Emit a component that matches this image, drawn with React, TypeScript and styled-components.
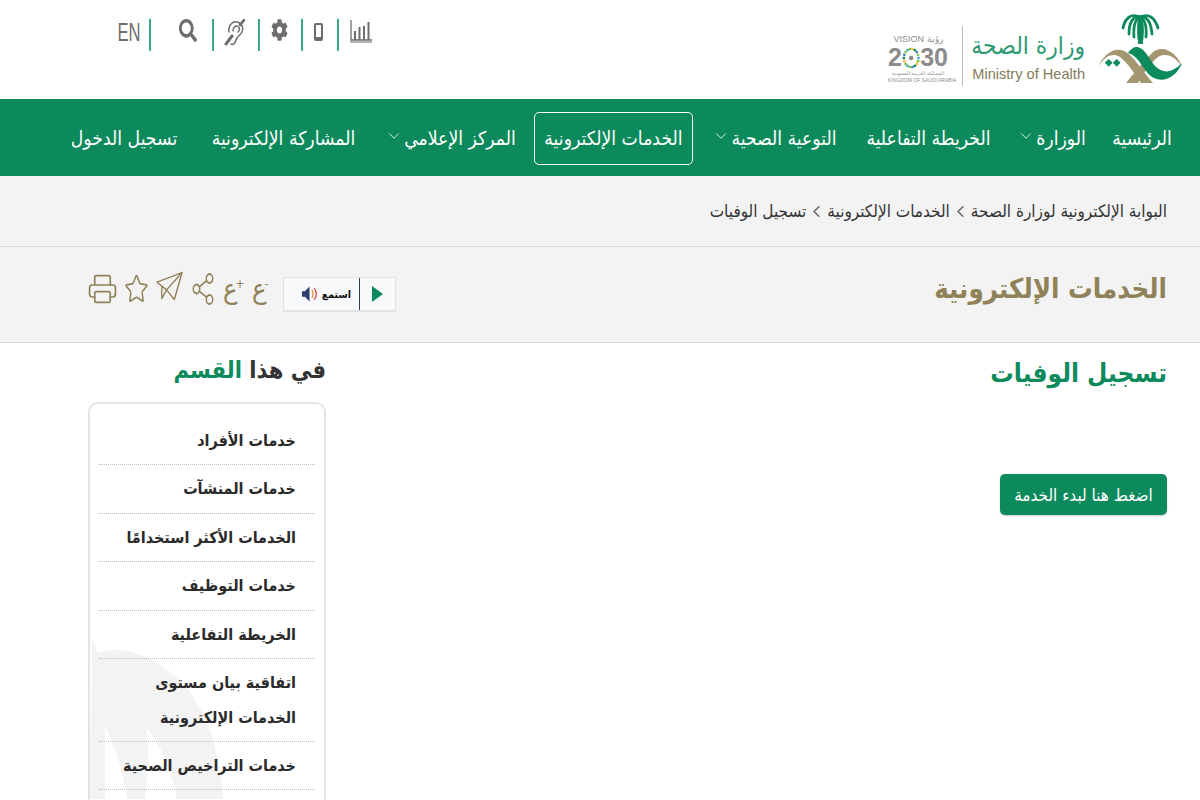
import * as React from "react";
import styled, { createGlobalStyle } from "styled-components";
import { FaSearch, FaCog } from "react-icons/fa";
import { Printer, Star, Share2, ChevronDown, ChevronLeft } from "lucide-react";

const FONT = `"DejaVu Sans Condensed", "DejaVu Sans", "Noto Sans", sans-serif`;
const GREEN = "#0c8a5c";
const GOLD = "#8f8258";

const GlobalStyle = createGlobalStyle`
  html, body {
    margin: 0;
    padding: 0;
    background: #fff;
    overflow: hidden;
  }
  * { box-sizing: border-box; }
`;

const navItems = [
  { label: "الرئيسية", width: 60 },
  { label: "الوزارة", width: 61, caret: true },
  { label: "الخريطة التفاعلية", width: 125 },
  { label: "التوعية الصحية", width: 123, caret: true },
  { label: "الخدمات الإلكترونية", width: 159, active: true },
  { label: "المركز الإعلامي", width: 127, caret: true },
  { label: "المشاركة الإلكترونية", width: 147 },
  { label: "تسجيل الدخول", width: 112 },
];

const sideItems = [
  "خدمات الأفراد",
  "خدمات المنشآت",
  "الخدمات الأكثر استخدامًا",
  "خدمات التوظيف",
  "الخريطة التفاعلية",
  "اتفاقية بيان مستوى الخدمات الإلكترونية",
  "خدمات التراخيص الصحية",
];

// dots of the ring that stands for the first 0 in 2030
const ringColors = ["#2fa8c9", "#7dbb42", "#f0b93a", "#0c8a5c", "#3a7fc1", "#8cc63f"];
const ringDots = Array.from({ length: 18 }, (_, i) => {
  const a = (i / 18) * Math.PI * 2;
  return {
    cx: 10 + Math.cos(a) * 8,
    cy: 12 + Math.sin(a) * 10,
    fill: ringColors[i % ringColors.length],
  };
});

const Logo = () => (
  <svg width="84" height="76" viewBox="0 0 84 76">
    <g fill="none" stroke={GREEN} strokeWidth="2.800" strokeLinecap="round">
      <path d="M42 6 C33 2 27 7 25 17" />
      <path d="M42 6 C35 5 31 11 31 23" />
      <path d="M42 6 C38 7 35 14 36 26" />
      <path d="M42 6 C41 9 40 18 41 28" />
      <path d="M42 6 C51 2 57 7 60 17" />
      <path d="M42 6 C49 5 53 11 54 23" />
      <path d="M42 6 C46 7 49 14 48 26" />
      <path d="M42 6 C44 9 45 18 44 28" />
    </g>
    <path d="M40 6 L44 6 L45 33 L40 33Z" fill={GREEN} />
    <path d="M0 56 C6 42 20 32 32 44 C40 52 46 62 55 72 L43 72 C36 62 30 52 22 46 C14 41 6 46 0 56Z" fill="#a39670" />
    <path d="M84 56 C80 42 64 32 54 42 C44 52 36 62 28 72 L40 72 C46 62 52 52 60 46 C68 41 78 46 84 56Z" fill="#a39670" />
    <path d="M30 42 C38 30 46 38 52 48 C58 58 68 68 84 52 C78 68 60 76 48 60 C42 52 38 44 30 42Z" fill={GREEN} />
    <rect x="8" y="49" width="5.500" height="5.500" transform="rotate(45 10.700 51.700)" fill={GREEN} />
    <rect x="16" y="49" width="5.500" height="5.500" transform="rotate(45 18.700 51.700)" fill={GREEN} />
  </svg>
);

const App = () => {
  return (
    <Page dir="rtl">
      <GlobalStyle />
      <Header>
        <LogoArea>
          <Logo />
          <MinistryText>
            <MinistryAr>وزارة الصحة</MinistryAr>
            <MinistryEn dir="ltr">Ministry of Health</MinistryEn>
          </MinistryText>
          <VisionBlock dir="ltr">
            <VisionTop>VISION رؤية</VisionTop>
            <VisionYear>
              2
              <svg width="20" height="24" viewBox="0 0 20 24">
                {ringDots.map((d, i) => (
                  <circle key={i} cx={d.cx} cy={d.cy} r="1.500" fill={d.fill} />
                ))}
                <circle cx="10" cy="12" r="2.500" fill="#8c8c8c" />
              </svg>
              30
            </VisionYear>
            <VisionSmall>المملكة العربية السعودية</VisionSmall>
            <VisionSmall>KINGDOM OF SAUDI ARABIA</VisionSmall>
          </VisionBlock>
        </LogoArea>
        <Tools dir="ltr">
          <ToolItem $w={33}>
            <EnLabel>EN</EnLabel>
          </ToolItem>
          <ToolItem $w={63} $end={15}>
            <SearchIcon preserveAspectRatio="none" />
          </ToolItem>
          <ToolItem $w={46}>
            <svg width="21" height="27" viewBox="0 0 21 27" fill="none" stroke="#6d6d6d" strokeLinecap="round">
              <path d="M20 1 L16 6" strokeWidth="2.800" />
              <path d="M8 17 L2 25" strokeWidth="3" />
              <path d="M5 13 C4 6 9 2 13 3 C18 4 20 9 18 13 C16 17 13 17 12 21 C11 25 9 26 7 25" strokeWidth="1.500" />
              <path d="M9 12 C9 8 12 6 14 7.500 C16 9 16 11 14 13" strokeWidth="1.500" />
            </svg>
          </ToolItem>
          <ToolItem $w={43}>
            <GearIcon preserveAspectRatio="none" />
          </ToolItem>
          <ToolItem $w={36}>
            <PhoneIcon />
          </ToolItem>
          <ToolItem $w={33} $end={0} $last>
            <svg width="22" height="24" viewBox="0 0 22 24" fill="none" stroke="#6d6d6d">
              <path d="M1 1v20h21" strokeWidth="1.300" />
              <path d="M0 23h22" strokeWidth="1" />
              <path d="M5 21V12M9.500 21V8M14 21V7M18.500 21V3" strokeWidth="2" />
            </svg>
          </ToolItem>
        </Tools>
      </Header>

      <Nav>
        {navItems.map((item) => (
          <NavItem key={item.label} $active={item.active} $w={item.width}>
            {item.label}
            {item.caret && <Caret size={18} strokeWidth={1.100} />}
          </NavItem>
        ))}
      </Nav>

      <Breadcrumb>
        <span>البوابة الإلكترونية لوزارة الصحة</span>
        <Sep size={19} strokeWidth={2} />
        <span>الخدمات الإلكترونية</span>
        <Sep size={19} strokeWidth={2} />
        <span>تسجيل الوفيات</span>
      </Breadcrumb>

      <TitleBand>
        <PageTitle>الخدمات الإلكترونية</PageTitle>
        <Actions dir="ltr">
          <GoldIcon $w={28}><PrinterIcon strokeWidth={1.300} preserveAspectRatio="none" /></GoldIcon>
          <GoldIcon $w={22}><StarIcon strokeWidth={1.400} preserveAspectRatio="none" /></GoldIcon>
          <GoldIcon $w={27} $up={5}>
            <svg width="28" height="31" viewBox="0 0 28 31" fill="none" stroke={GOLD} strokeWidth="1.400" strokeLinejoin="round">
              <path d="M1 11 L27 1 L19 29 L11 19 L1 11Z" />
              <path d="M27 1 L11 19 L6 28 L6 15" />
            </svg>
          </GoldIcon>
          <GoldIcon $w={22}><ShareIcon strokeWidth={1.300} preserveAspectRatio="none" /></GoldIcon>
          <FontGlyph>ع<sup>+</sup></FontGlyph>
          <FontGlyph>ع<sup>-</sup></FontGlyph>
          <Listen>
            <ListenCell>
              <svg width="16" height="18" viewBox="0 0 17 18" fill="none">
                <path d="M0 6H3L8 1V17L3 12H0Z" fill="#2c3e70" />
                <path d="M10.500 5 C12 7 12 11 10.500 13" stroke="#e8903a" strokeWidth="1.400" />
                <path d="M13 3 C16 7 16 11 13 15" stroke="#d9483b" strokeWidth="1.400" />
              </svg>
              <ListenLabel>استمع</ListenLabel>
            </ListenCell>
            <PlayCell>
              <svg width="11" height="16" viewBox="0 0 11 16"><path d="M0 0L11 8L0 16Z" fill={GREEN} /></svg>
            </PlayCell>
          </Listen>
        </Actions>
      </TitleBand>

      <Main>
        <Content>
          <ContentTitle>تسجيل الوفيات</ContentTitle>
          <StartButton>اضغط هنا لبدء الخدمة</StartButton>
        </Content>
        <Aside>
          <AsideTitle>
            في هذا <em>القسم</em>
          </AsideTitle>
          <SideCard>
            <Watermark width="140" height="163" viewBox="0 0 140 163">
              <path d="M2 3 C4 8 6 12 8 17 C40 5 100 30 122 100 C128 125 132 145 133 163 L0 163Z" fill="#f3f3f3" />
              <path d="M15 90 C25 110 33 135 37 163 L15 163Z" fill="#fff" />
              <path d="M57 93 C72 110 82 135 87 163 L55 163 C58 140 59 115 57 93Z" fill="#fff" />
            </Watermark>
            {sideItems.map((s) => (
              <SideItem key={s}>{s}</SideItem>
            ))}
          </SideCard>
        </Aside>
      </Main>
    </Page>
  );
};

const Page = styled.div`
  width: 1200px;
  height: 800px;
  overflow: hidden;
  font-family: ${FONT};
  font-stretch: condensed;
  background: #fff;
`;

const Header = styled.header`
  height: 99px;
  display: flex;
  justify-content: space-between;
  padding: 0 18px 0 118px;
`;

const LogoArea = styled.div`
  display: flex;
  align-items: flex-start;
  padding-top: 11px;
`;

const MinistryText = styled.div`
  display: flex;
  flex-direction: column;
  align-items: flex-start;
  justify-content: flex-end;
  width: 123px;
  height: 60px;
  margin: 15px 13px 0 0;
  padding: 0 0 0 10px;
  border-left: 1px solid #b9b9b9;
`;

const MinistryAr = styled.div`
  font-size: 24.300px;
  line-height: 35px;
  color: #2f9a74;
  white-space: nowrap;
`;

const MinistryEn = styled.div`
  font-family: "Liberation Sans", sans-serif;
  font-size: 14.600px;
  line-height: 23px;
  color: #857b58;
  white-space: nowrap;
`;

const VisionBlock = styled.div`
  width: 60px;
  margin: 22px 14px 0 0;
  color: #8c8c8c;
  text-align: center;
  font-family: "Liberation Sans", sans-serif;
`;

const VisionTop = styled.div`
  font-size: 9px;
  line-height: 12px;
  white-space: nowrap;
`;

const VisionYear = styled.div`
  display: flex;
  align-items: center;
  justify-content: center;
  font-size: 25px;
  line-height: 25px;
  font-weight: 700;
`;

const VisionSmall = styled.div`
  font-size: 5px;
  line-height: 7px;
  white-space: nowrap;
`;

const Tools = styled.div`
  display: flex;
  align-items: flex-start;
  height: 32px;
  margin-top: 19px;
`;

const ToolItem = styled.div<{ $w: number; $end?: number; $last?: boolean }>`
  display: flex;
  align-items: flex-start;
  justify-content: ${(p) => (p.$end !== undefined ? "flex-end" : "center")};
  width: ${(p) => p.$w}px;
  height: 32px;
  padding-right: ${(p) => p.$end ?? 3}px;
  border-right: ${(p) => (p.$last ? "none" : "2px solid #3aa981")};
  color: #6d6d6d;
`;

const EnLabel = styled.span`
  display: block;
  margin-right: 5px;
  font-family: "Liberation Sans", sans-serif;
  font-size: 26px;
  line-height: 26px;
  transform: scaleX(0.64);
`;

const SearchIcon = styled(FaSearch)`
  width: 18px;
  height: 23px;
`;

const GearIcon = styled(FaCog)`
  width: 17px;
  height: 22px;
`;

const PhoneIcon = styled.span`
  display: block;
  width: 9px;
  height: 18px;
  margin-top: 4px;
  border: 2px solid #6d6d6d;
  border-bottom-width: 4px;
  border-radius: 2px;
`;

const Nav = styled.nav`
  height: 77px;
  background: ${GREEN};
  display: flex;
  align-items: center;
  padding: 2px 28px 0 0;
  gap: 30px;
`;

const NavItem = styled.a<{ $active?: boolean; $w: number }>`
  display: flex;
  align-items: center;
  justify-content: center;
  gap: 1px;
  width: ${(p) => p.$w}px;
  height: 53px;
  margin: ${(p) => (p.$active ? "0 -10px" : "0")};
  flex: none;
  color: #fff;
  font-size: 19.200px;
  white-space: nowrap;
  border: ${(p) => (p.$active ? "1px solid #fff" : "1px solid transparent")};
  border-radius: 5px;
`;

const Caret = styled(ChevronDown)`
  flex: none;
  margin-top: -6px;
`;

const Breadcrumb = styled.div`
  height: 71px;
  background: #f3f3f3;
  border-bottom: 1px solid #dcdcdc;
  display: flex;
  align-items: center;
  padding: 0 33px 0 0;
  gap: 1px;
  color: #333;
  font-size: 17px;
`;

const Sep = styled(ChevronLeft)`
  flex: none;
  color: #6a6a6a;
`;

const TitleBand = styled.div`
  height: 96px;
  background: #f3f3f3;
  border-bottom: 1px solid #d4d4d4;
  display: flex;
  justify-content: space-between;
  align-items: center;
  padding: 0 33px 12px 0;
`;

const PageTitle = styled.h1`
  margin: 0;
  font-size: 27.400px;
  font-weight: 700;
  color: ${GOLD};
`;

const Actions = styled.div`
  display: flex;
  align-items: center;
  gap: 9px;
  padding-left: 88px;
`;

const GoldIcon = styled.span<{ $w: number; $up?: number }>`
  display: flex;
  justify-content: center;
  width: ${(p) => p.$w}px;
  margin-bottom: ${(p) => p.$up ?? 0}px;
  color: ${GOLD};
`;

const PrinterIcon = styled(Printer)`
  flex: none;
  width: 31px;
  height: 32px;
`;

const StarIcon = styled(Star)`
  flex: none;
  width: 25px;
  height: 32px;
`;

const ShareIcon = styled(Share2)`
  flex: none;
  width: 26px;
  height: 36px;
`;

const FontGlyph = styled.span`
  width: 20px;
  color: ${GOLD};
  font-size: 27px;
  line-height: 30px;
  white-space: nowrap;
  sup {
    margin-left: -2px;
    font-size: 12px;
    line-height: 0;
  }
`;

const Listen = styled.div`
  display: flex;
  margin: 12px 0 0 2px;
  width: 113px;
  height: 35px;
  background: #f7f9fb;
  border: 1px solid #e2e2e2;
  border-bottom-width: 2px;
`;

const PlayCell = styled.div`
  width: 36px;
  display: flex;
  align-items: center;
  justify-content: center;
  border-left: 1px solid #2c3e50;
`;

const ListenCell = styled.div`
  flex: 1;
  display: flex;
  align-items: center;
  justify-content: flex-end;
  gap: 4px;
  padding-right: 8px;
`;

const ListenLabel = styled.span`
  font-size: 10.500px;
  color: #111;
  font-weight: 700;
`;

const Main = styled.main`
  display: flex;
  justify-content: space-between;
  padding: 0 33px 0 0;
`;

const Content = styled.section`
  flex: 1;
`;

const ContentTitle = styled.h2`
  margin: 8px 0 0;
  font-size: 26px;
  line-height: 44px;
  font-weight: 700;
  color: ${GREEN};
`;

const StartButton = styled.button`
  display: block;
  margin-top: 79px;
  width: 167px;
  height: 41px;
  padding: 0;
  border: none;
  border-radius: 5px;
  background: ${GREEN};
  color: #fff;
  font-family: ${FONT};
  font-stretch: condensed;
  font-size: 17px;
  box-shadow: 0 1px 2px rgba(0, 0, 0, 0.2);
`;

const Aside = styled.aside`
  width: 238px;
  margin-inline-end: 88px;
  flex: none;
`;

const AsideTitle = styled.h3`
  margin: 7px 0 12px;
  font-size: 23.500px;
  line-height: 40px;
  font-weight: 700;
  color: #333;
  em {
    font-style: normal;
    color: ${GREEN};
  }
`;

const SideCard = styled.div`
  position: relative;
  overflow: hidden;
  border: 2px solid #e3e3e3;
  border-radius: 10px;
  padding: 13px 9px 40px;
  background: #fff;
`;

const Watermark = styled.svg`
  position: absolute;
  left: 0;
  top: 232px;
`;

const SideItem = styled.a`
  position: relative;
  display: block;
  padding: 6px 19px 6px 15px;
  min-height: 48.400px;
  font-size: 16px;
  line-height: 35px;
  font-weight: 700;
  color: #2b2b2b;
  border-bottom: 1px dotted #bdbdbd;
`;

export default App;
